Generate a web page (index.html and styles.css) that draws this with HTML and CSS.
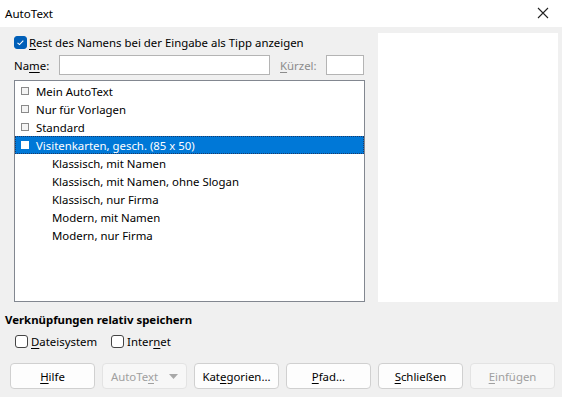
FILE: index.html
```html
<!DOCTYPE html>
<html lang="de">
<head>
<meta charset="utf-8">
<title>AutoText</title>
<link rel="stylesheet" href="styles.css">
</head>
<body>
<div class="dialog">
  <div class="titlebar">
    <span class="title">AutoText</span>
    <svg class="close" width="12" height="12" viewBox="0 0 12 12"><path d="M1 1L11 11M11 1L1 11" stroke="#222" stroke-width="1.1" fill="none"/></svg>
  </div>
  <div class="main">
    <div class="leftcol">
      <label class="chkrow">
        <span class="chk checked"><svg width="13" height="13" viewBox="0 0 13 13"><path d="M3.5 6.8L5.5 8.6L9.3 4.6" stroke="#fff" stroke-width="1.1" fill="none"/></svg></span>
        <span><u>R</u>est des Namens bei der Eingabe als Tipp anzeigen</span>
      </label>
      <div class="namerow">
        <span class="lbl namelbl">Na<u>m</u>e:</span>
        <span class="input name"></span>
        <span class="lbl dim"><u>K</u>ürzel:</span>
        <span class="input short"></span>
      </div>
      <div class="tree">
        <div class="row"><span class="node"></span>Mein AutoText</div>
        <div class="row"><span class="node"></span>Nur für Vorlagen</div>
        <div class="row"><span class="node"></span>Standard</div>
        <div class="row sel"><span class="node"></span>Visitenkarten, gesch. (85 x 50)</div>
        <div class="row child">Klassisch, mit Namen</div>
        <div class="row child">Klassisch, mit Namen, ohne Slogan</div>
        <div class="row child">Klassisch, nur Firma</div>
        <div class="row child">Modern, mit Namen</div>
        <div class="row child">Modern, nur Firma</div>
      </div>
    </div>
    <div class="preview"></div>
  </div>
  <div class="links">
    <div class="heading">Verknüpfungen relativ speichern</div>
    <div class="linkrow">
      <label class="chkrow small"><span class="chk"></span><span><u>D</u>ateisystem</span></label>
      <label class="chkrow small"><span class="chk"></span><span>Inter<u>n</u>et</span></label>
    </div>
  </div>
  <div class="buttons">
    <button class="btn"><span><u>H</u>ilfe</span></button>
    <button class="btn disabled drop"><span>AutoTe<u>x</u>t</span><svg width="9" height="5" viewBox="0 0 9 5"><path d="M0 0H9L4.5 5Z" fill="#a8a8a8"/></svg></button>
    <button class="btn"><span>Kat<u>e</u>gorien...</span></button>
    <button class="btn"><span><u>P</u>fad...</span></button>
    <button class="btn"><span><u>S</u>chließen</span></button>
    <button class="btn disabled"><span><u>E</u>infügen</span></button>
  </div>
</div>
</body>
</html>
```
FILE: styles.css
```css
* { box-sizing: border-box; }
html, body { margin: 0; padding: 0; }
body {
  width: 562px;
  height: 397px;
  overflow: hidden;
  background: #f0f0f0;
  font-family: "Noto Sans", "Open Sans", sans-serif;
  font-size: 11.4px;
  color: #000;
}
u { text-decoration-thickness: 1px; text-underline-offset: 2px; }
.dialog { width: 562px; height: 397px; display: flex; flex-direction: column; }
.titlebar {
  height: 27px;
  background: #fff;
  display: flex;
  align-items: center;
  justify-content: space-between;
  padding: 0 13px 1px 5px;
}
.title { font-size: 11.6px; color: #000; }
.main {
  display: flex;
  gap: 13px;
  padding: 6px 0 0 14px;
}
.leftcol { width: 351px; display: flex; flex-direction: column; }
.chkrow { display: flex; align-items: center; gap: 2px; height: 18px; }
.chk {
  width: 13px; height: 13px;
  border: 1px solid #444;
  border-radius: 3px;
  background: #fff;
  display: inline-flex;
  flex: none;
}
.chk.checked { background: #005fb8; border-color: #005fb8; }
.chk.checked svg { margin: -1px; }
.namerow {
  margin-top: 4px;
  height: 20px;
  display: flex;
  align-items: center;
}
.lbl { white-space: nowrap; }
.namelbl { width: 45px; }
.dim { color: #8c8c8c; margin-left: 10px; width: 46px; }
.input { display: block; height: 20px; background: #fff; border: 1px solid #b4b4b4; flex: none; }
.input.name { width: 211px; }
.input.short { width: 38px; }
.tree {
  margin-top: 5px;
  height: 222px;
  background: #fff;
  border: 1px solid #828790;
  padding-top: 1px;
}
.row {
  height: 18px;
  display: flex;
  align-items: center;
  padding-left: 6px;
  white-space: nowrap;
}
.node {
  width: 8px; height: 8px;
  border: 1px solid #8a8a8a;
  background: #f4f4f4;
  margin-right: 7px;
}
.row.sel {
  background: #0078d7;
  color: #fff;
  outline: 1px dotted #1a3a6a;
  outline-offset: -1px;
}
.row.sel .node { background: #fff; border-color: #fff; }
.row.child { padding-left: 37px; }
.preview { width: 180px; height: 269px; background: #fff; }
.links { padding: 9px 0 0 5px; }
.heading { font-weight: bold; height: 18px; line-height: 18px; }
.linkrow { display: flex; gap: 14px; padding-left: 10px; margin-top: 3px; }
.small { gap: 3px; }
.buttons { display: flex; gap: 7px; padding: 13px 0 0 10px; }
.btn {
  width: 85px; height: 26px;
  background: #fdfdfd;
  border: 1px solid #d0d0d0;
  border-radius: 4px;
  font-family: inherit;
  font-size: 11.4px;
  color: #000;
  padding: 0;
  display: flex;
  align-items: center;
  justify-content: center;
}
.btn.disabled { background: #f7f7f7; border-color: #e3e3e3; color: #a0a0a0; }
.btn.drop { gap: 11px; }
```
